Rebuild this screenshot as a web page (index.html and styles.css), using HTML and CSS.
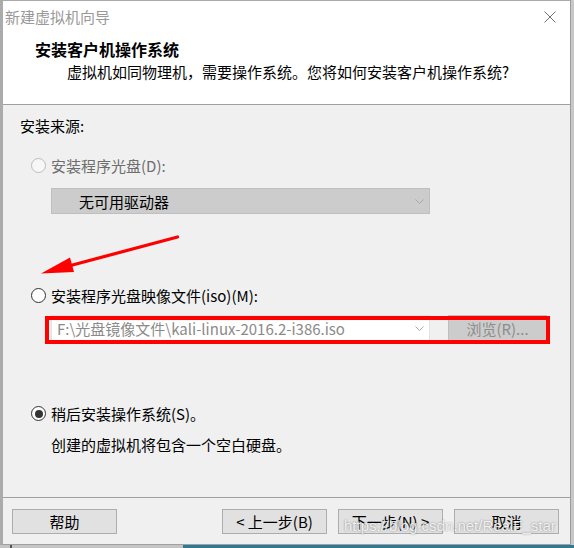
FILE: index.html
```html
<!DOCTYPE html>
<html lang="zh-CN">
<head>
<meta charset="utf-8">
<title>新建虚拟机向导</title>
<link rel="stylesheet" href="styles.css">
</head>
<body>
<div class="window">
  <div class="titlebar">
    <span class="title">新建虚拟机向导</span>
    <svg class="close" width="12" height="12" viewBox="0 0 12 12"><path d="M0.5 0.5 L11.5 11.5 M11.5 0.5 L0.5 11.5" stroke="#707070" stroke-width="1" fill="none"/></svg>
  </div>
  <div class="header">
    <div class="h-title">安装客户机操作系统</div>
    <div class="h-sub">虚拟机如同物理机，需要操作系统。您将如何安装客户机操作系统?</div>
  </div>
  <div class="content">
    <div class="src-label">安装来源:</div>

    <div class="opt opt-1 disabled">
      <span class="radio"></span>
      <span class="opt-text">安装程序光盘(D):</span>
    </div>
    <div class="drop drop-disabled">
      <span class="drop-text">无可用驱动器</span>
      <svg class="chev" width="9" height="5" viewBox="0 0 9 5"><path d="M0.5 0.5 L4.5 4.5 L8.5 0.5" stroke="#a8a8a8" stroke-width="1" fill="none"/></svg>
    </div>

    <div class="opt opt-2">
      <span class="radio"></span>
      <span class="opt-text">安装程序光盘映像文件(iso)(M):</span>
    </div>
    <div class="iso-row">
      <div class="combo">
        <span class="combo-field">F:\光盘镜像文件\kali-linux-2016.2-i386.iso</span>
        <svg class="chev" width="9" height="5" viewBox="0 0 9 5"><path d="M0.5 0.5 L4.5 4.5 L8.5 0.5" stroke="#a8a8a8" stroke-width="1" fill="none"/></svg>
      </div>
      <div class="browse">浏览(R)...</div>
      <div class="red-box"></div>
    </div>

    <div class="opt opt-3">
      <span class="radio checked"></span>
      <span class="opt-text">稍后安装操作系统(S)。</span>
    </div>
    <div class="note">创建的虚拟机将包含一个空白硬盘。</div>

    <svg class="arrow" width="200" height="190" viewBox="0 0 200 190">
      <line x1="174.5" y1="132" x2="62" y2="162" stroke="#ff0000" stroke-width="3.2" stroke-linecap="round"/>
      <polygon points="38,168.5 67,152.5 71,167" fill="#ff0000"/>
    </svg>
  </div>
  <div class="footer">
    <div class="btn">帮助</div>
    <div class="btn push">&lt; 上一步(B)</div>
    <div class="btn">下一步(N) &gt;</div>
    <div class="btn">取消</div>
  </div>
  <div class="watermark">https://blog.csdn.net/RealF_star</div>
</div>
<div class="desktop">
  <div class="desk-left"><span class="desk-line"></span></div>
  <div class="desk-right"></div>
</div>
</body>
</html>
```
FILE: styles.css
```css
* { box-sizing: border-box; }
html, body {
  margin: 0;
  padding: 0;
}
body {
  width: 574px;
  height: 548px;
  overflow: hidden;
  background: #c8c8c8;
  font-family: "Noto Sans CJK SC", "Noto Sans", sans-serif;
  font-size: 15px;
  color: #000;
}
.window {
  position: relative;
  width: 571px;
  height: 545px;
  border-left: 3px solid #ababab;
  border-right: 1px solid #9c9c9c;
  border-top: 1px solid #a9a9a9;
  border-bottom: 1px solid #a0a0a0;
  background: #f0f0f0;
  display: flex;
  flex-direction: column;
}
.titlebar {
  height: 31px;
  background: #fff;
  display: flex;
  align-items: center;
  padding-left: 2px;
}
.title {
  color: #999;
  font-size: 15px;
  line-height: 15px;
}
.close {
  margin-left: auto;
  margin-right: 14px;
  display: block;
}
.header {
  height: 73px;
  background: #fff;
  border-bottom: 1px solid #a0a0a0;
  padding-top: 9px;
}
.h-title {
  font-weight: 700;
  font-size: 16px;
  line-height: 16px;
  padding-left: 32px;
}
.h-sub {
  font-size: 15px;
  line-height: 15px;
  margin-top: 7px;
  padding-left: 64px;
}
.content {
  position: relative;
  height: 392px;
  padding-top: 13px;
}
.src-label {
  line-height: 15px;
  padding-left: 17px;
}
.opt {
  display: flex;
  align-items: center;
  height: 15px;
  margin-left: 28px;
  line-height: 15px;
}
.opt-1 { margin-top: 25px; }
.opt-2 { margin-top: 74px; }
.opt-3 { margin-top: 65px; }
.disabled .opt-text { color: #6d6d6d; }
.opt-text { margin-left: 5px; }
.radio {
  width: 15px;
  height: 15px;
  border-radius: 50%;
  border: 1px solid #333;
  background: #fff;
  flex: none;
  display: flex;
  align-items: center;
  justify-content: center;
}
.disabled .radio {
  border-color: #bcbcbc;
  background: #f7f7f7;
}
.radio.checked::after {
  content: "";
  width: 8px;
  height: 8px;
  border-radius: 50%;
  background: #333;
}
.drop {
  margin-top: 15px;
  margin-left: 48px;
  width: 379px;
  height: 26px;
  display: flex;
  align-items: center;
}
.drop-disabled {
  background: #cccccc;
  border: 1px solid #bfbfbf;
  padding-left: 27px;
}
.drop-text {
  line-height: 15px;
}
.chev {
  margin-left: auto;
  margin-right: 5px;
  display: block;
}
.iso-row {
  position: relative;
  margin-top: 12px;
  margin-left: 48px;
  display: flex;
  height: 26px;
  gap: 18px;
}
.combo {
  width: 379px;
  height: 26px;
  background: #fff;
  border: 1px solid #e3e3e3;
  display: flex;
  align-items: center;
  padding-left: 5px;
}
.combo-field {
  color: #8a8a8a;
  line-height: 15px;
}
.browse {
  width: 99px;
  height: 26px;
  background: #cccccc;
  border: 1px solid #bfbfbf;
  color: #8d8d8d;
  display: flex;
  align-items: center;
  justify-content: center;
  line-height: 15px;
}
.red-box {
  position: absolute;
  left: -6px;
  top: 1px;
  width: 505px;
  height: 28px;
  border: 4px solid #ff0000;
}
.note {
  margin-top: 16px;
  padding-left: 48px;
  line-height: 15px;
}
.arrow {
  position: absolute;
  left: 0;
  top: 0;
}
.footer {
  flex: 1;
  border-top: 1px solid #a0a0a0;
  display: flex;
  align-items: flex-start;
  padding-top: 11px;
  padding-left: 9px;
  gap: 11px;
}
.btn {
  width: 105px;
  height: 25px;
  background: #e1e1e1;
  border: 1px solid #adadad;
  display: flex;
  align-items: center;
  justify-content: center;
  line-height: 15px;
}
.btn.push { margin-left: 94px; }
.watermark {
  position: absolute;
  left: 341px;
  top: 516px;
  font-family: "Liberation Sans", Arial, sans-serif;
  font-size: 15px;
  line-height: 17px;
  color: rgba(255, 255, 255, 0.85);
  text-shadow: 0 0 2px rgba(0, 0, 0, 0.45);
  white-space: nowrap;
}
.desktop {
  display: flex;
  height: 3px;
}
.desk-left {
  width: 183px;
  background: #c4c4c4;
}
.desk-line {
  display: block;
  margin-left: 10px;
  width: 2px;
  height: 3px;
  background: #555;
}
.desk-right {
  flex: 1;
  background: #2f7a93;
}
```
